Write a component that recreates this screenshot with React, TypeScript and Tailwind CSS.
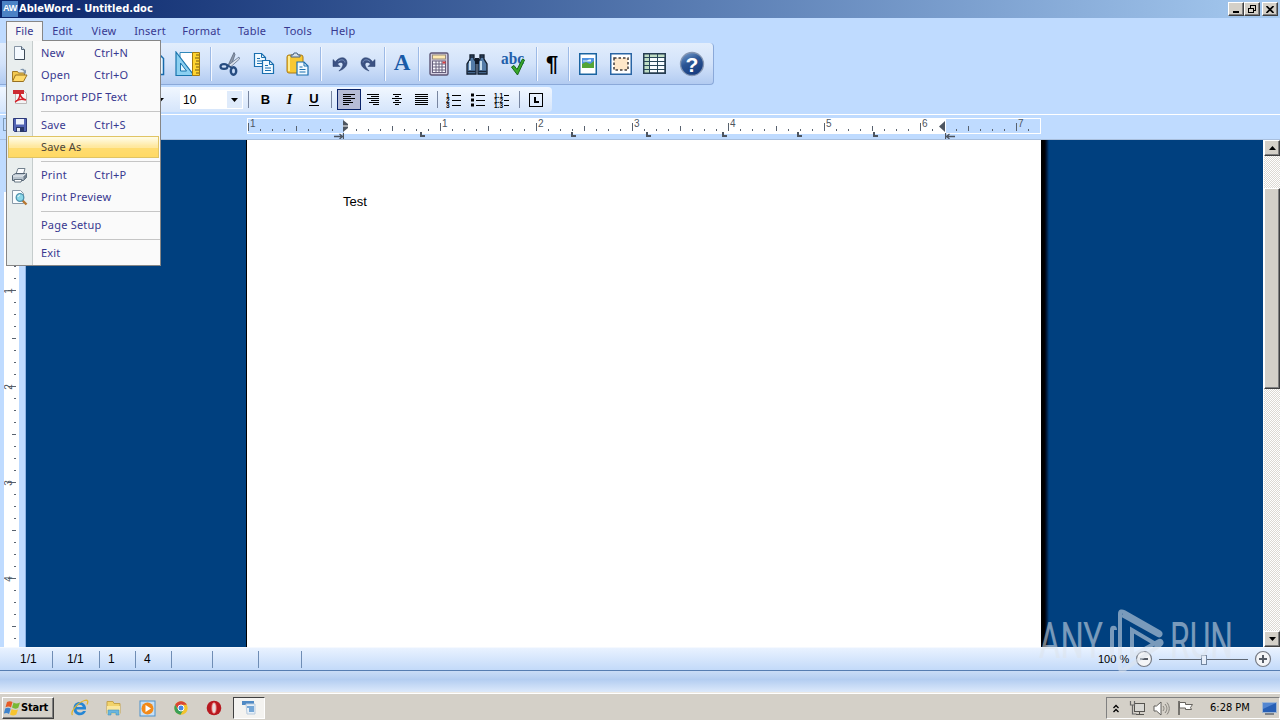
import type { ReactNode } from "react"
import clsx from "clsx"

interface MenuEntry {
  label: string
  shortcut?: string
  icon?: ReactNode
  active?: boolean
  divider?: boolean
}

const MENUS = [
  { label: "File", className: "w-[37px]" },
  { label: "Edit", className: "w-[39px]" },
  { label: "View", className: "w-[44px]" },
  { label: "Insert", className: "w-[48px]" },
  { label: "Format", className: "w-[55px]" },
  { label: "Table", className: "w-[46px]" },
  { label: "Tools", className: "w-[46px]" },
  { label: "Help", className: "w-[44px]" },
]

const TAB_STOPS = [420, 571, 646, 722, 797, 873]

const ui = "font-['Noto_Sans','Open_Sans',sans-serif] text-[11px]"
const tahoma = "font-['DejaVu_Sans_Condensed','DejaVu_Sans',sans-serif]"
const raised =
  "border border-t-white border-l-white border-r-[#404040] border-b-[#404040] bg-[#d4d0c8] shadow-[inset_-1px_-1px_0_#808080]"

function Slot({ className, children }: { className: string; children?: ReactNode }) {
  return <div className={clsx("flex shrink-0 items-center justify-center", className)}>{children}</div>
}

function Separator({ className }: { className: string }) {
  return (
    <Slot className={className}>
      <div className="h-[34px] w-px bg-[#9dbae6] shadow-[1px_0_0_#f4f8ff]" />
    </Slot>
  )
}

function SmallSeparator({ className }: { className: string }) {
  return (
    <Slot className={className}>
      <div className="h-[17px] w-px bg-[#7886a0]" />
    </Slot>
  )
}

/* ---------- file menu icons ---------- */

function NewIcon() {
  return (
    <svg width="16" height="16" viewBox="0 0 16 16">
      <path d="M2.5 1.5h7l3 3v10h-10z" fill="#f5faff" stroke="#8694a4" />
      <path d="M3 14.5h9.5v-10" fill="none" stroke="#3c4957" />
      <path d="M9.5 1.5v3h3" fill="#c3d4e4" stroke="#586878" />
    </svg>
  )
}

function OpenIcon() {
  return (
    <svg width="18" height="16" viewBox="0 0 18 16">
      <path d="M1.5 13.500V4.500h5l1 1.500h6v3" fill="#f3c951" stroke="#a27a27" />
      <path d="M1.500 14.500l3-6.500h11.500l-3.500 6.500z" fill="#ffda6a" stroke="#98701f" />
      <path d="M9 3c2-2 4-1.500 5 .5l1-1v4h-3l1-1.500c-1-2-2-2-4-2z" fill="#8398af" />
    </svg>
  )
}

function PdfIcon() {
  return (
    <svg width="16" height="16" viewBox="0 0 16 16">
      <path d="M3.500 2.500h9l2 2v10h-11z" fill="#f4f4f5" stroke="#bdb7b7" />
      <rect x="1" y="1" width="11" height="4" fill="#cc2a31" />
      <path d="M3 13c3-1 5-5 5-9 0 4 3 6 6 7M4 12c3-2 7-2 10-1" fill="none" stroke="#d51f28" strokeWidth="1.600" />
    </svg>
  )
}

function SaveIcon() {
  return (
    <svg width="16" height="16" viewBox="0 0 16 16">
      <path d="M1.500 1.500h13v13h-12l-1-1z" fill="#5264b4" stroke="#2d3979" />
      <rect x="4" y="2" width="8" height="5.500" fill="#edf2fb" />
      <rect x="4" y="10" width="8" height="5" fill="#293769" />
      <rect x="5" y="11" width="3" height="3.500" fill="#e8edf6" />
    </svg>
  )
}

function PrintIcon() {
  return (
    <svg width="17" height="16" viewBox="0 0 17 16">
      <path d="M5 7l2-5.500h7L12.500 7z" fill="#fcfdff" stroke="#71808d" />
      <path d="M1.500 8.500l3-2h11v4l-3 3h-11z" fill="#bac5cf" stroke="#536272" />
      <path d="M2 9h10l3-2.500" fill="none" stroke="#eef3f7" />
      <path d="M3 12.500h8l-1 2.500H3.500z" fill="#fff" stroke="#657481" />
      <path d="M12.500 9.500v4l3-3v-4z" fill="#73818f" />
    </svg>
  )
}

function PreviewIcon() {
  return (
    <svg width="17" height="17" viewBox="0 0 17 17">
      <path d="M1.500 1.500h8l3 3v10h-11z" fill="#fafdff" stroke="#8a9aa9" />
      <path d="M11 11l4.500 4.500" stroke="#b67732" strokeWidth="2.400" />
      <circle cx="9" cy="8.500" r="3.800" fill="#8bd7e8" stroke="#4f92ac" strokeWidth="1.300" />
      <path d="M7 8c.3-1.400 1-1.800 2-1.900" fill="none" stroke="#fff" />
    </svg>
  )
}

const FILE_MENU: MenuEntry[] = [
  { label: "New", shortcut: "Ctrl+N", icon: <NewIcon /> },
  { label: "Open", shortcut: "Ctrl+O", icon: <OpenIcon /> },
  { label: "Import PDF Text", icon: <PdfIcon /> },
  { label: "Save", shortcut: "Ctrl+S", icon: <SaveIcon />, divider: true },
  { label: "Save As", active: true },
  { label: "Print", shortcut: "Ctrl+P", icon: <PrintIcon />, divider: true },
  { label: "Print Preview", icon: <PreviewIcon /> },
  { label: "Page Setup", divider: true },
  { label: "Exit", divider: true },
]

function FileMenu() {
  return (
    <div className="absolute top-[40px] left-[6px] z-20 w-[155px] border border-[#868686] bg-[#fafafa] py-px">
      <div className="absolute inset-y-0 left-0 w-[26px] border-r border-[#c5cccc] bg-[#e9eeee]" />
      <div className="absolute -top-px left-0 h-px w-[35px] bg-[#f6f6f6]" />
      {FILE_MENU.map((item) => (
        <div key={item.label} className="relative">
          {item.divider && (
            <div className="flex h-[6px] items-center pl-[34px]">
              <div className="h-px w-full bg-[#c5c5c5]" />
            </div>
          )}
          <div
            className={clsx(
              "mx-px flex h-[22px] items-center tracking-[0.2px]",
              item.active
                ? "border border-[#e0c464] bg-linear-to-b from-[#fffbe2] from-5% via-[#ffe9a2] via-45% to-[#ffdf79] text-[#4c4438] shadow-[inset_0_-9px_0_#ffd657a0]"
                : "border border-transparent text-[#383890]",
            )}
          >
            <span className="flex w-[21px] shrink-0 justify-center">{item.icon}</span>
            <span className="ml-[11px] w-[53px] whitespace-nowrap">{item.label}</span>
            <span className="whitespace-nowrap">{item.shortcut}</span>
          </div>
        </div>
      ))}
    </div>
  )
}

/* ---------- main toolbar icons ---------- */

function PageIcon() {
  return (
    <svg width="20" height="26" viewBox="0 0 20 26">
      <path d="M1.500 2.500h12l5 5v16h-17z" fill="#e9f6ff" stroke="#176aab" strokeWidth="1.500" />
    </svg>
  )
}

function RulerIcon() {
  return (
    <svg width="26" height="26" viewBox="0 0 26 26">
      <path d="M5 1.500h13v23H5z" fill="#fff" stroke="#3188ba" />
      <path d="M1 1l18 23.500H1z" fill="#8bd0f1" stroke="#1974ac" strokeWidth="1.200" />
      <path d="M5.500 12v8h6z" fill="#e7f7ff" stroke="#1974ac" />
      <path d="M17.500 1.500h7v23h-7z" fill="#ffd430" stroke="#a47a11" />
      <path d="M24 4h-3M24 7h-4M24 10h-3M24 13h-4M24 16h-3M24 19h-4M24 22h-3" stroke="#735910" />
    </svg>
  )
}

function ScissorsIcon() {
  return (
    <svg width="22" height="26" viewBox="0 0 22 26">
      <path d="M15 1.500l1 2-4 12-3-1z" fill="#8f9aab" stroke="#4d5c73" strokeWidth=".7" />
      <path d="M20 6l.5 2-9 8-2-2z" fill="#d9e0ea" stroke="#536581" strokeWidth=".7" />
      <ellipse cx="5" cy="15.500" rx="3.500" ry="2.400" fill="none" stroke="#264c80" strokeWidth="2.200" />
      <ellipse cx="14.500" cy="20" rx="2.700" ry="3.700" fill="none" stroke="#264c80" strokeWidth="2.400" />
      <path d="M8 14l5 3" stroke="#264c80" strokeWidth="2" />
    </svg>
  )
}

function SheetPath({ x, y }: { x: number; y: number }) {
  return (
    <g transform={`translate(${x} ${y})`}>
      <path d="M.5.500h7l4 4v9H.500z" fill="#f1faff" stroke="#1b6faf" strokeWidth="1.200" />
      <path d="M7.500.500v4h4M3 5.500h3M3 8h6M3 10.500h6" fill="none" stroke="#1b6faf" />
    </g>
  )
}

function CopyIcon() {
  return (
    <svg width="22" height="22" viewBox="0 0 22 22">
      <SheetPath x={1} y={0} />
      <SheetPath x={9} y={7} />
    </svg>
  )
}

function PasteIcon() {
  return (
    <svg width="23" height="24" viewBox="0 0 23 24">
      <rect x="1" y="3" width="16" height="18" rx="2" fill="#f8c832" stroke="#a97915" />
      <path d="M3 4v15" stroke="#ffec90" strokeWidth="2" />
      <path d="M5 5V3h2l1-2h3l1 2h2v2z" fill="#d4dfeb" stroke="#486382" />
      <SheetPath x={10.500} y={9.500} />
    </svg>
  )
}

function UndoIcon({ flip }: { flip?: boolean }) {
  return (
    <svg width="16" height="18" viewBox="0 0 16 18" className={flip ? "-scale-x-100" : undefined}>
      <path d="M1 4.500v7h7L5.500 9c2-2.300 5-2.100 5.400.3.200 2-1.600 4.300-4 6.700 5-1.700 8.100-4.700 8.100-8.200C15 2 8 .5 3.300 6.700z" fill="#3c5283" stroke="#273d68" strokeWidth=".5" />
      <path d="M6 6.500c3-2.700 6.700-1.800 7 1" fill="none" stroke="#7c95c0" />
    </svg>
  )
}

function CalculatorIcon() {
  return (
    <svg width="20" height="24" viewBox="0 0 20 24">
      <rect x="1" y="1" width="18" height="22" rx="1.500" fill="#d4cfe1" stroke="#5d5674" strokeWidth="1.400" />
      <rect x="3.500" y="3" width="13" height="4" fill="#ffe9af" stroke="#988b79" />
      <rect x="3.500" y="9" width="13" height="11.500" fill="#faf9ff" stroke="#655e7b" />
      <path d="M3.500 12h13M3.500 15h13M3.500 18h13M7 9v11.500M10 9v11.500M13 9v11.500" stroke="#655e7b" />
      <path d="M13.500 9.500h3v2h-3z" fill="#dc3e40" />
    </svg>
  )
}

function BinocularsIcon() {
  return (
    <svg width="22" height="22" viewBox="0 0 22 22">
      <path d="M4 2h4v4l2 3v12H1V11l3-5zM14 2h4v4l3 5v10h-9V9l2-3z" fill="#537ba7" stroke="#111d2c" strokeWidth="1.300" />
      <path d="M9 5h4v6H9z" fill="#0f1927" />
      <path d="M4 8v9M15 8v9" stroke="#c6ddee" strokeWidth="2" />
      <path d="M1.500 18.500h8M12.500 18.500h8M4 4h4M14 4h4" stroke="#162235" strokeWidth="1.500" />
    </svg>
  )
}

function SpellIcon() {
  return (
    <svg width="25" height="28" viewBox="0 0 25 28">
      <text x="0" y="13.500" fontFamily="Liberation Serif, serif" fontWeight="700" fontSize="16.500" fill="#235faa" textLength="23" lengthAdjust="spacingAndGlyphs">abc</text>
      <path d="M10.500 17l2.500-1.500 3 4L21.500 9l2 1L16.500 25z" fill="#39a82b" stroke="#176719" />
    </svg>
  )
}

function PictureIcon() {
  return (
    <svg width="18" height="22" viewBox="0 0 18 22">
      <rect x=".75" y=".75" width="16.500" height="20.500" fill="#fff" stroke="#1a64a1" strokeWidth="1.500" />
      <rect x="3" y="5" width="12" height="10" fill="#4f93e0" />
      <path d="M3 11l4-2 4 2 4-3v7H3z" fill="#54a536" />
      <path d="M4 7.500h4l2-1h2v2H4z" fill="#ecf7ff" />
    </svg>
  )
}

function FrameIcon() {
  return (
    <svg width="22" height="22" viewBox="0 0 22 22">
      <rect x=".75" y=".75" width="20.500" height="20.500" fill="#fff" stroke="#2965a5" strokeWidth="1.500" />
      <rect x="4" y="5" width="14" height="12" fill="#ffe7c8" stroke="#413c3c" strokeWidth="1.500" strokeDasharray="2.500 2" />
    </svg>
  )
}

function TableIcon() {
  return (
    <svg width="23" height="21" viewBox="0 0 23 21">
      <rect x=".75" y=".75" width="21.500" height="19.500" fill="#f7fcff" stroke="#263d51" strokeWidth="1.500" />
      <path d="M1 1h5v19H1zM1 1h21v3H1z" fill="#bfddc4" />
      <path d="M1 4.500h21M1 8.500h21M1 12.500h21M1 16.500h21M6.500 1v19M14.500 1v19" stroke="#284759" />
      <rect x=".75" y=".75" width="21.500" height="19.500" fill="none" stroke="#263d51" strokeWidth="1.500" />
    </svg>
  )
}

function HelpIcon() {
  return (
    <svg width="26" height="26" viewBox="0 0 26 26">
      <defs>
        <linearGradient id="help-fill" x1="0" y1="0" x2="0.500" y2="1">
          <stop offset="0" stopColor="#7fa4d2" />
          <stop offset=".5" stopColor="#2c5695" />
          <stop offset="1" stopColor="#173d80" />
        </linearGradient>
      </defs>
      <circle cx="13" cy="13" r="11.500" fill="url(#help-fill)" stroke="#8596b2" strokeWidth="1.300" />
      <text x="13" y="20.500" textAnchor="middle" fontFamily="Liberation Sans, sans-serif" fontWeight="700" fontSize="21" fill="#fff">?</text>
    </svg>
  )
}

function MainToolbar() {
  return (
    <div className="flex h-[42px] w-[714px] items-center rounded-r-[4px] border-r border-b border-[#8ba9d9] bg-linear-to-b from-[#e2edfc] via-[#d3e3fa] via-50% to-[#b2cbf1] pl-[142px]">
      <Slot className="w-[26px]"><PageIcon /></Slot>
      <Slot className="w-[39px]"><RulerIcon /></Slot>
      <Separator className="w-[6px]" />
      <Slot className="w-[34px]"><ScissorsIcon /></Slot>
      <Slot className="w-[34px]"><CopyIcon /></Slot>
      <Slot className="w-[32px]"><PasteIcon /></Slot>
      <Separator className="w-[14px]" />
      <Slot className="w-[26px]"><UndoIcon /></Slot>
      <Slot className="w-[30px]"><UndoIcon flip /></Slot>
      <Separator className="w-[3px]" />
      <Slot className="w-[32px] font-['Liberation_Serif',serif] text-[23px] font-bold text-[#195aa7]">A</Slot>
      <Separator className="w-px" />
      <Slot className="w-[40px]"><CalculatorIcon /></Slot>
      <Slot className="w-[36px]"><BinocularsIcon /></Slot>
      <Slot className="w-[37px]"><SpellIcon /></Slot>
      <Separator className="w-[8px]" />
      <Slot className="w-[24px] font-['Liberation_Sans',sans-serif] text-[22px] font-bold text-black">¶</Slot>
      <Separator className="w-[8px]" />
      <Slot className="w-[32px]"><PictureIcon /></Slot>
      <Slot className="w-[34px]"><FrameIcon /></Slot>
      <Slot className="w-[33px]"><TableIcon /></Slot>
      <Slot className="w-[41px]"><HelpIcon /></Slot>
    </div>
  )
}

/* ---------- format toolbar ---------- */

function Lines({ d }: { d: string }) {
  return (
    <svg width="14" height="12" viewBox="0 0 14 12" shapeRendering="crispEdges">
      <path d={d} stroke="#000" fill="none" />
    </svg>
  )
}

function ListIcon({ marks }: { marks?: string[] }) {
  const wide = marks?.[0].length === 3
  return (
    <svg width="16" height="16" viewBox="0 0 16 16">
      {[3, 8, 13].map((y, i) => (
        <g key={y}>
          {marks ? (
            <text x="0" y={y + 2.500} fontSize="6.500" fontWeight="700" fontFamily="Liberation Sans, sans-serif">{marks[i]}</text>
          ) : (
            <rect x="1" y={y - 1.500} width="3" height="3" />
          )}
          <path d={`M${wide ? 10 : 6} ${y + 0.500}H15`} stroke="#000" />
        </g>
      ))}
    </svg>
  )
}

function DownArrow() {
  return (
    <svg width="7" height="4" viewBox="0 0 7 4">
      <path d="M0 0h7L3.500 4z" />
    </svg>
  )
}

function FormatToolbar() {
  return (
    <div className="flex h-[25px] w-[552px] items-center rounded-r-[4px] bg-linear-to-b from-[#f1f7ff] to-[#d5e5fb] font-['Liberation_Sans',sans-serif] text-[13px] text-black">
      <Slot className="h-[19px] w-[168px] justify-end! pr-[4px]"><DownArrow /></Slot>
      <div className="ml-[12px] flex h-[19px] w-[63px] items-center bg-white text-[12px]">
        <span className="w-[47px] pl-[3px]">10</span>
        <span className="flex h-[17px] w-[15px] items-center justify-center bg-[#dfebfb]"><DownArrow /></span>
      </div>
      <SmallSeparator className="w-[11px]" />
      <Slot className="w-[23px] font-bold">B</Slot>
      <Slot className="w-[25px] font-['Liberation_Serif',serif] text-[14px] font-bold italic">I</Slot>
      <Slot className="w-[24px]"><span className="border-b border-black leading-[12px] font-bold">U</span></Slot>
      <SmallSeparator className="w-[11px]" />
      <Slot className="h-[21px] w-[24px] border border-[#0a246a] bg-[#b6bcd6]">
        <Lines d="M1 .5h12M1 2.500h8M1 4.500h12M1 6.500h8M1 8.500h10M1 10.500h6" />
      </Slot>
      <Slot className="w-[24px]"><Lines d="M1 .5h12M5 2.500h8M1 4.500h12M5 6.500h8M3 8.500h10M7 10.500h6" /></Slot>
      <Slot className="w-[24px]"><Lines d="M3 .5h8M5 2.500h4M2 4.500h10M5 6.500h4M3 8.500h8M5 10.500h4" /></Slot>
      <Slot className="w-[24px]"><Lines d="M1 .5h13M1 2.500h13M1 4.500h13M1 6.500h13M1 8.500h13M1 10.500h13" /></Slot>
      <SmallSeparator className="w-[9px]" />
      <Slot className="w-[24px]"><ListIcon marks={["1", "2", "3"]} /></Slot>
      <Slot className="w-[24px]"><ListIcon /></Slot>
      <Slot className="w-[24px]"><ListIcon marks={["1.1", "1.2", "1.3"]} /></Slot>
      <SmallSeparator className="w-[10px]" />
      <Slot className="w-[24px]">
        <svg width="14" height="14" viewBox="0 0 14 14" shapeRendering="crispEdges">
          <rect x=".5" y=".5" width="13" height="13" fill="none" stroke="#000" />
          <path d="M6 4v5h4" fill="none" stroke="#000" strokeWidth="2" />
        </svg>
      </Slot>
    </div>
  )
}

/* ---------- rulers ---------- */

function HorizontalRuler() {
  return (
    <div className="relative flex h-[25px] shrink-0 border-b border-[#a9bfdd] pl-[247px]">
      <div className="mt-[3px] flex h-[16px] w-[794px] overflow-hidden border border-white bg-[linear-gradient(to_right,#bfdbff_96px,#fff_96px,#fff_698px,#bfdbff_698px)] pb-[2px]">
        {Array.from({ length: 66 }, (_, i) => (
          <div key={i} className="flex w-[12px] shrink-0 items-end">
            <div
              className={clsx(
                "w-px shrink-0 bg-[#58626f]",
                i % 8 === 0 ? "h-[8px]" : i % 4 === 0 ? "h-[5px]" : "h-[2px]",
                i === 8 && "invisible",
              )}
            />
            {i % 8 === 0 && i !== 8 && (
              <span className="mb-[3px] ml-px self-end font-['Liberation_Sans',sans-serif] text-[10px] leading-[8px] text-[#4d5560]">
                {Math.abs(i / 8 - 1)}
              </span>
            )}
          </div>
        ))}
      </div>
      <svg width="5" height="12" viewBox="0 0 5 12" className="absolute top-[5px] left-[343px]">
        <path d="M0 0l5 4v4l-5 4z" fill="#4d5560" />
        <path d="M0 6h5" stroke="#fff" />
      </svg>
      <svg width="10" height="6" viewBox="0 0 10 6" className="absolute top-[18px] left-[334px]">
        <path d="M0 3.500h8M9.500 0v6M5.500 1l3 2.500L5.500 6" fill="none" stroke="#4d5560" strokeWidth="1.300" />
      </svg>
      <svg width="6" height="11" viewBox="0 0 6 11" className="absolute top-[6px] left-[939px]">
        <path d="M6 0v11L0 5.500z" fill="#4d5560" />
      </svg>
      <svg width="10" height="6" viewBox="0 0 10 6" className="absolute top-[18px] left-[945px]">
        <path d="M10 3.500H2M.5 0v6M4.500 1l-3 2.500L4.500 6" fill="none" stroke="#4d5560" strokeWidth="1.300" />
      </svg>
      {TAB_STOPS.map((x) => (
        <div
          key={x}
          className="absolute top-[17px] h-[5px] w-[5px] border-b-2 border-l-2 border-[#4d5560]"
          style={{ left: x }}
        />
      ))}
      <div className="absolute top-[3px] left-[3px] size-[13px] border border-[#7d9ab9]" />
    </div>
  )
}

function VerticalRuler() {
  return (
    <div className="w-[26px] shrink-0 border-r border-[#8db2e3] bg-[#bfdbff] pl-[4px]">
      <div className="flex h-full w-[15px] flex-col overflow-hidden bg-[linear-gradient(to_bottom,#bfdbff_52px,#fff_52px)] pt-[54px]">
        {Array.from({ length: 38 }, (_, i) => (
          <div key={i} className="relative flex h-[12px] shrink-0 justify-end pr-[3px]">
            <div className={clsx("h-px bg-[#58626f]", i % 8 === 0 ? "w-[8px]" : i % 8 === 4 ? "w-[4px]" : "w-[2px]")} />
            {i % 8 === 0 && i > 0 && (
              <span className="absolute top-[-3px] left-[2px] -rotate-90 font-['Liberation_Sans',sans-serif] text-[10px] leading-[8px] text-[#4d5560]">
                {i / 8}
              </span>
            )}
          </div>
        ))}
      </div>
    </div>
  )
}

function ScrollBar() {
  return (
    <div className="flex w-[17px] shrink-0 flex-col border-l border-white bg-[#eeece8] bg-[repeating-conic-gradient(#dcd9d3_0_25%,#fff_0_50%)] bg-[length:2px_2px]">
      <div className={clsx("flex h-[16px] items-center justify-center", raised)}>
        <svg width="7" height="4" viewBox="0 0 7 4"><path d="M0 4h7L3.500 0z" /></svg>
      </div>
      <div className={clsx("mt-[32px] h-[201px]", raised)} />
      <div className={clsx("mt-auto flex h-[16px] items-center justify-center", raised)}>
        <DownArrow />
      </div>
    </div>
  )
}

/* ---------- bottom bars ---------- */

function ZoomButton({ plus }: { plus?: boolean }) {
  return (
    <svg width="18" height="18" viewBox="0 0 18 18">
      <circle cx="9" cy="9" r="7.500" fill="#f4f5f7" stroke="#767b85" strokeWidth="1.200" />
      <path d={plus ? "M5 9h8M9 5v8" : "M5 9h8"} stroke="#555b65" strokeWidth="2" />
    </svg>
  )
}

function StatusBar() {
  const cell = "flex h-[17px] shrink-0 items-center border-r border-[#6f8db5]"
  return (
    <div className="flex h-[24px] shrink-0 items-center border-t border-b border-t-[#f5f9ff] border-b-[#567db1] bg-linear-to-b from-[#e9f2ff] to-[#c3daf9] font-['Liberation_Sans',sans-serif] text-[12px] text-black">
      <div className={clsx(cell, "w-[53px] pl-[20px]")}>1/1</div>
      <div className={clsx(cell, "w-[47px] pl-[14px]")}>1/1</div>
      <div className={clsx(cell, "w-[36px] pl-[8px]")}>1</div>
      <div className={clsx(cell, "w-[36px] pl-[8px]")}>4</div>
      <div className={clsx(cell, "w-[41px]")} />
      <div className={clsx(cell, "w-[46px]")} />
      <div className={clsx(cell, "w-[43px]")} />
      <div className="ml-auto flex items-center pr-[8px]">
        <span className="mr-[7px] w-[30px] text-[11px] whitespace-nowrap">100 %</span>
        <ZoomButton />
        <div className="relative mx-[6px] h-px w-[89px] bg-[#5f6874]">
          <div className="absolute -top-[4px] left-[42px] h-[10px] w-[6px] border border-[#71859f] bg-[#e6eefa]" />
        </div>
        <ZoomButton plus />
      </div>
    </div>
  )
}

function WindowsFlag() {
  return (
    <svg width="17" height="16" viewBox="0 0 17 16">
      <path d="M3 2c2-1.300 4-1 5.500 0L7 7.500C5.500 6.300 3.500 6.300 1.500 7.300z" fill="#e65b25" />
      <path d="M9.500 2.500C11.500 3.800 13.500 3.700 16 2.500l-1.700 5.300c-2.300 1.300-4.300 1-6.300-.3z" fill="#78b834" />
      <path d="M1.200 8.500c2-1 4-1 5.500.3L5 14c-1.800-1.300-3.500-1.200-5.200-.3z" fill="#3e83cc" />
      <path d="M7.700 9c2 1.300 4 1.500 6.300.4L12.300 14.500c-2.300 1.300-4.300 1.200-6.300 0z" fill="#f8c42e" />
    </svg>
  )
}

function TaskBar() {
  return (
    <div className={clsx("flex h-[28px] shrink-0 items-center border-t border-[#ece9e4] bg-[#d4d0c8] pt-[3px] pl-[2px] text-black shadow-[inset_0_1px_0_#fff]", tahoma)}>
      <div className={clsx("flex h-[22px] w-[52px] items-center pl-px text-[11px] font-bold", raised)}>
        <WindowsFlag />
        <span className="tracking-[-0.2px]">Start</span>
      </div>
      <Slot className="ml-[9px] w-[34px]">
        <svg width="18" height="18" viewBox="0 0 18 18">
          <path d="M15 10.500H5.500c.3 3.500 5 4 6.500 1.500h3c-2 6-12.500 6-12.500-2.500S13.500 1 15 8.500zM5.700 8h6c-.5-3-5.400-3-6 0z" fill="#2686d4" />
          <path d="M1.500 16c-2.500-3 4.500-12 12-14.500 3.500-1 4 1 2.500 4" fill="none" stroke="#e2b52d" strokeWidth="1.300" />
        </svg>
      </Slot>
      <Slot className="w-[33px]">
        <svg width="17" height="17" viewBox="0 0 17 17">
          <path d="M2 1.500h6l1 2h6v10H2z" fill="#f2d36a" stroke="#c5a34c" />
          <path d="M2 6h13v8H2z" fill="#fbe79d" />
          <path d="M3 15v-5h11v5h-3v-2H6v2z" fill="#69b6df" stroke="#4c93bb" strokeWidth=".6" />
        </svg>
      </Slot>
      <Slot className="w-[34px]">
        <svg width="17" height="17" viewBox="0 0 17 17">
          <rect x="1" y="1" width="15" height="15" fill="#c7e0f6" stroke="#4c91cb" />
          <circle cx="8.500" cy="8.500" r="6" fill="#f28a1a" />
          <path d="M6.500 5v7l5.500-3.500z" fill="#fff" />
        </svg>
      </Slot>
      <Slot className="w-[33px]">
        <svg width="14" height="14" viewBox="0 0 14 14">
          <circle cx="7" cy="7" r="6.700" fill="#f3c32c" />
          <path d="M1.200 3.700A6.700 6.700 0 0 1 12.800 3.700H7L4.500 9z" fill="#d94436" />
          <path d="M1.200 3.700A6.700 6.700 0 0 0 6.500 13.700L9.500 8.500 4 8.500z" fill="#3ba057" />
          <circle cx="7" cy="7" r="3" fill="#4788e4" stroke="#fff" />
        </svg>
      </Slot>
      <Slot className="w-[34px]">
        <svg width="16" height="16" viewBox="0 0 16 16">
          <circle cx="8" cy="8" r="7.300" fill="#b71920" />
          <ellipse cx="8" cy="8" rx="2.200" ry="5.300" fill="#e7dddd" stroke="#f06a68" strokeWidth=".8" />
        </svg>
      </Slot>
      <div className="ml-[2px] flex h-[22px] w-[32px] items-center justify-center border border-t-[#404040] border-r-white border-b-white border-l-[#404040] bg-[#f4f3f0]">
        <svg width="16" height="16" viewBox="0 0 16 16">
          <rect x="1" y="1" width="12" height="4" fill="#508ac4" />
          <path d="M5 4h9v10H6z" fill="#e7f0f8" stroke="#b8cbdd" />
          <path d="M6 7h7M8 9h5M8 11h5" stroke="#4f8fcb" strokeWidth="1.300" />
        </svg>
      </div>
      <div className="ml-auto flex h-[22px] w-[174px] items-center border border-[#808080] border-r-white border-b-white text-[11px]">
        <svg width="6" height="9" viewBox="0 0 6 9" className="ml-[6px]">
          <path d="M.5 4L3 1.500 5.500 4M.5 8L3 5.500 5.500 8" fill="none" stroke="#000" strokeWidth="1.300" />
        </svg>
        <svg width="16" height="16" viewBox="0 0 16 16" className="ml-[10px]">
          <rect x="5.500" y="3.500" width="10" height="8" fill="#d9d8d4" stroke="#55534f" />
          <path d="M7 14.500h8M10.500 12v2" stroke="#55534f" />
          <path d="M1.500 1v4h4V1M3.500 5v9h4" fill="none" stroke="#666" strokeWidth="1.200" />
        </svg>
        <svg width="17" height="15" viewBox="0 0 17 15" className="ml-[8px]">
          <path d="M1 5h2.500L8 1v13l-4.500-4H1z" fill="#fff" stroke="#615f5b" />
          <path d="M10 5c1.300 1.500 1.300 3.500 0 5M12 3c2.500 3 2.500 6 0 9M14 1.500c3 4 3 8 0 12" fill="none" stroke="#85827c" />
        </svg>
        <svg width="17" height="16" viewBox="0 0 17 16" className="ml-[7px]">
          <path d="M2 1v14" stroke="#595753" strokeWidth="1.500" />
          <path d="M2.500 2.500h6v2h7l-2 3 1 2h-6v-1.500h-6z" fill="#fff" stroke="#66635e" />
        </svg>
        <span className="ml-[16px] w-[41px] whitespace-nowrap">6:28 PM</span>
        <svg width="15" height="13" viewBox="0 0 15 13" className="ml-[11px]">
          <rect x=".5" y=".5" width="14" height="10" fill="#275fb5" stroke="#9eb5d2" />
          <path d="M1 1h13L1 7z" fill="#5386d1" />
          <path d="M3 12h9" stroke="#263449" />
        </svg>
      </div>
    </div>
  )
}

function Watermark() {
  return (
    <svg width="200" height="66" viewBox="0 0 200 66" className="pointer-events-none absolute top-[608px] left-[1036px] z-30 opacity-55">
      <g fill="#dde4ec" fontFamily="Roboto, Liberation Sans, sans-serif" fontSize="50">
        <text x="3" y="50" textLength="64" lengthAdjust="spacingAndGlyphs">ANY</text>
        <text x="134" y="50" textLength="63" lengthAdjust="spacingAndGlyphs">RUN</text>
      </g>
      <path d="M76 50V22c0-3 3-3 3 0v0M84 50V6c0-3 2-3 4-2l35 20c3 2 1 4-1 3L86 7M84 50V60c0 3 3 3 5 1l35-24c3-2 1-5-1-4L96 48V22l27 16" fill="none" stroke="#dde4ec" strokeWidth="4" />
    </svg>
  )
}

export default function App() {
  return (
    <div className={clsx("relative flex h-[720px] w-[1280px] flex-col overflow-hidden bg-[#bfdbff]", ui)}>
      <header className="flex h-[18px] shrink-0 items-center bg-linear-to-r from-[#0a246a] to-[#a6caf0] pr-[2px] pl-[2px]">
        <div className="flex size-[16px] items-center justify-center bg-[#4b82c5] font-['Liberation_Sans',sans-serif] text-[9px] font-bold tracking-[-0.3px] text-white">
          AW
        </div>
        <span className={clsx("ml-px text-[11px] font-bold text-white", tahoma)}>AbleWord - Untitled.doc</span>
        <div className="ml-auto flex">
          <div className={clsx("flex h-[14px] w-[16px] items-end justify-center pb-[2px]", raised)}>
            <div className="h-[2px] w-[6px] bg-black" />
          </div>
          <div className={clsx("flex h-[14px] w-[16px] items-center justify-center", raised)}>
            <svg width="10" height="10" viewBox="0 0 10 10" shapeRendering="crispEdges">
              <path d="M3.500 4V1h5v5H6M3 1.500h6M1.500 4v4.500h5V4zM1 4.500h6" fill="none" stroke="#000" />
            </svg>
          </div>
          <div className={clsx("ml-[2px] flex h-[14px] w-[16px] items-center justify-center", raised)}>
            <svg width="8" height="7" viewBox="0 0 8 7"><path d="M.5 0l7 7M7.500 0l-7 7" stroke="#000" strokeWidth="1.600" /></svg>
          </div>
        </div>
      </header>

      <nav className="flex h-[25px] shrink-0 pt-[3px] pl-[6px] tracking-[0.2px] text-[#383890]">
        {MENUS.map((menu, i) => (
          <div
            key={menu.label}
            className={clsx(
              "flex h-[20px] items-center justify-center",
              menu.className,
              i === 0 && "border border-b-0 border-[#868686] bg-[#f6f6f6]",
            )}
          >
            {menu.label}
          </div>
        ))}
      </nav>
      <FileMenu />

      <div className="flex h-[72px] shrink-0 flex-col gap-[2px] border-b border-white">
        <MainToolbar />
        <FormatToolbar />
      </div>

      <HorizontalRuler />

      <main className="flex h-[507px] shrink-0">
        <VerticalRuler />
        <div className="flex flex-1 bg-[#00407f] pl-[220px]">
          <div className="w-[795px] border-l border-black bg-white pt-[54px] pl-[96px] font-['Liberation_Sans',sans-serif] text-[13px] leading-[15px] text-black">
            Test
          </div>
          <div className="w-[8px] bg-linear-to-r from-black from-30% to-[#00407f]" />
        </div>
        <ScrollBar />
      </main>

      <StatusBar />
      <div className="h-[21px] shrink-0 bg-linear-to-b from-[#c9dcf6] via-[#b3cdf1] via-40% to-[#dce9fb]" />
      <TaskBar />
      <Watermark />
    </div>
  )
}
